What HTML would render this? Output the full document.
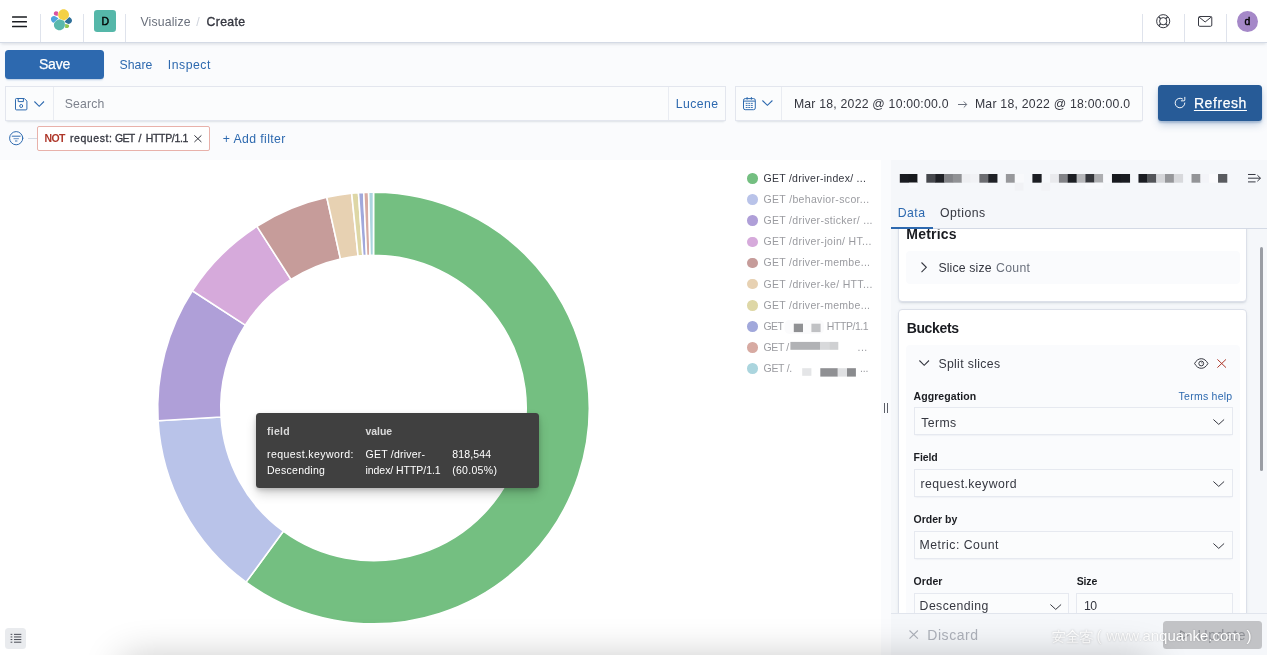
<!DOCTYPE html>
<html lang="en">
<head>
<meta charset="utf-8">
<title>Visualize - Create</title>
<style>
*{box-sizing:border-box;margin:0;padding:0}
html,body{width:1267px;height:655px;overflow:hidden;background:#fafbfd;font-family:"Liberation Sans",sans-serif;}
body{position:relative;will-change:transform}
.abs{position:absolute}
.t{position:absolute;white-space:pre;line-height:1;font-family:"Liberation Sans",sans-serif;}
svg{display:block;overflow:visible}
.hdr{left:0;top:0;width:1267px;height:43.4px;background:#fff;border-bottom:1px solid #d4dae5;box-shadow:0 2px 3px -1px rgba(152,162,179,.35)}
.vdiv{width:1px;top:14px;height:28px;background:#dfe3ec}
.ctl{background:#fbfcfd;box-shadow:0 1px 1px -1px rgba(152,162,179,.25),0 3px 2px -2px rgba(152,162,179,.25),inset 0 0 0 1px #e3e6ee;}
.sel{background:#fbfcfd;box-shadow:0 1px 1px -1px rgba(152,162,179,.18),0 2px 2px -2px rgba(152,162,179,.18),inset 0 0 0 1px #e6e9f0;height:28px}
.panel{background:#fff;border:1px solid #dce0e9;border-radius:4px;box-shadow:0 2px 2px -1px rgba(152,162,179,.3),0 1px 5px -2px rgba(152,162,179,.3)}
</style>
</head>
<body>

<!-- ===== visualization canvas ===== -->
<div class="abs" style="left:0;top:160.3px;width:880.5px;height:495px;background:#fff"></div>
<svg class="abs" style="left:0;top:0" width="880" height="655" viewBox="0 0 880 655"><g stroke="#fff" stroke-width="1.6" stroke-linejoin="round"><path d="M373.50 192.20A215.8 215.8 0 1 1 246.05 582.14L283.31 531.22A152.7 152.7 0 1 0 373.50 255.30Z" fill="#74bf81"/><path d="M246.05 582.14A215.8 215.8 0 0 1 158.08 420.80L221.07 417.06A152.7 152.7 0 0 0 283.31 531.22Z" fill="#b9c3e9"/><path d="M158.08 420.80A215.8 215.8 0 0 1 192.31 290.78L245.29 325.06A152.7 152.7 0 0 0 221.07 417.06Z" fill="#af9fd8"/><path d="M192.31 290.78A215.8 215.8 0 0 1 256.92 226.40L291.01 279.50A152.7 152.7 0 0 0 245.29 325.06Z" fill="#d6aadb"/><path d="M256.92 226.40A215.8 215.8 0 0 1 326.79 197.32L340.45 258.92A152.7 152.7 0 0 0 291.01 279.50Z" fill="#c69c9a"/><path d="M326.79 197.32A215.8 215.8 0 0 1 351.69 193.30L358.07 256.08A152.7 152.7 0 0 0 340.45 258.92Z" fill="#e7d1b2"/><path d="M351.69 193.30A215.8 215.8 0 0 1 358.45 192.73L362.85 255.67A152.7 152.7 0 0 0 358.07 256.08Z" fill="#ded7a6"/><path d="M358.45 192.73A215.8 215.8 0 0 1 363.71 192.42L366.57 255.46A152.7 152.7 0 0 0 362.85 255.67Z" fill="#a1a8db"/><path d="M363.71 192.42A215.8 215.8 0 0 1 368.60 192.26L370.04 255.34A152.7 152.7 0 0 0 366.57 255.46Z" fill="#d7aaa2"/><path d="M368.60 192.26A215.8 215.8 0 0 1 373.50 192.20L373.50 255.30A152.7 152.7 0 0 0 370.04 255.34Z" fill="#abd5de"/></g></svg>

<!-- bottom soft shadow -->


<!-- legend -->
<div class="abs" style="left:747.3px;top:173.10px;width:10.6px;height:10.6px;border-radius:50%;background:#74bf81"></div><div class="abs" style="left:747.3px;top:194.25px;width:10.6px;height:10.6px;border-radius:50%;background:#b9c3e9"></div><div class="abs" style="left:747.3px;top:215.40px;width:10.6px;height:10.6px;border-radius:50%;background:#af9fd8"></div><div class="abs" style="left:747.3px;top:236.55px;width:10.6px;height:10.6px;border-radius:50%;background:#d6aadb"></div><div class="abs" style="left:747.3px;top:257.70px;width:10.6px;height:10.6px;border-radius:50%;background:#c69c9a"></div><div class="abs" style="left:747.3px;top:278.85px;width:10.6px;height:10.6px;border-radius:50%;background:#e7d1b2"></div><div class="abs" style="left:747.3px;top:300.00px;width:10.6px;height:10.6px;border-radius:50%;background:#ded7a6"></div><div class="abs" style="left:747.3px;top:321.15px;width:10.6px;height:10.6px;border-radius:50%;background:#a1a8db"></div><div class="abs" style="left:747.3px;top:342.30px;width:10.6px;height:10.6px;border-radius:50%;background:#d7aaa2"></div><div class="abs" style="left:747.3px;top:363.45px;width:10.6px;height:10.6px;border-radius:50%;background:#abd5de"></div>
<svg class="abs" style="left:0;top:0;filter:blur(0.4px)" width="900" height="400" viewBox="0 0 900 400">
  <rect x="784.5" y="320" width="39.5" height="14" rx="5" fill="#fbfbfc"/>
  <rect x="793.8" y="323.7" width="9.2" height="8.4" fill="#8f9093"/>
  <rect x="811.4" y="323.7" width="9.2" height="8.4" fill="#c0c1c4"/>
  <rect x="790.4" y="341.9" width="29.6" height="7.9" fill="#b1b2b5"/>
  <rect x="820" y="341.9" width="9.2" height="7.9" fill="#d8d9db"/>
  <rect x="829.2" y="341.9" width="9.1" height="7.9" fill="#cfd0d2"/>
  <rect x="802.2" y="368.2" width="9.2" height="7.6" fill="#e4e5e7"/>
  <rect x="820.3" y="368.2" width="17.5" height="8.4" fill="#8f9093"/>
  <rect x="837.8" y="368.2" width="9.2" height="8.4" fill="#e0e1e3"/>
  <rect x="847" y="368.2" width="8.9" height="8.4" fill="#8a8b8e"/>
</svg>

<!-- tooltip -->
<div class="abs" style="left:256.4px;top:413.1px;width:282.2px;height:75.3px;background:#404040;border-radius:3.5px;box-shadow:0 6px 12px -1px rgba(0,0,0,.2),0 2px 4px rgba(0,0,0,.16)"></div>

<!-- legend toggle button (bottom-left) -->
<div class="abs" style="left:5.1px;top:627.5px;width:21.4px;height:21.4px;background:#e9ebee;border-radius:3.5px"></div>
<svg class="abs" style="left:10px;top:633px" width="12" height="10" viewBox="0 0 12 10">
  <g fill="#4a4d56">
    <rect x="0.6" y="0.85" width="1.7" height="1"/><rect x="4" y="0.85" width="7.3" height="1"/>
    <rect x="0.6" y="3.45" width="1.7" height="1"/><rect x="4" y="3.45" width="7.3" height="1"/>
    <rect x="0.6" y="6.05" width="1.7" height="1"/><rect x="4" y="6.05" width="7.3" height="1"/>
    <rect x="0.6" y="8.7" width="1.7" height="1"/><rect x="4" y="8.7" width="7.3" height="1"/>
  </g>
</svg>

<!-- resizer handle -->
<div class="abs" style="left:884px;top:403px;width:1.15px;height:10.4px;background:#5b5e67"></div>
<div class="abs" style="left:887px;top:403px;width:1.15px;height:10.4px;background:#5b5e67"></div>

<!-- ===== sidebar ===== -->
<div class="abs" style="left:891.1px;top:160.3px;width:376px;height:495px;background:#f5f7fa"></div>
<svg class="abs" style="left:0;top:0;filter:blur(0.3px)" width="1267" height="200" viewBox="0 0 1267 200"><rect x="899.80" y="174.0" width="9.24" height="8.7" fill="#1a1c21"/><rect x="908.64" y="174.0" width="9.24" height="8.7" fill="#17191d"/><rect x="917.48" y="174.0" width="9.24" height="8.7" fill="#f7f8fb"/><rect x="926.32" y="174.0" width="9.24" height="8.7" fill="#46484d"/><rect x="935.16" y="174.0" width="9.24" height="8.7" fill="#1f2126"/><rect x="944.00" y="174.0" width="9.24" height="8.7" fill="#828387"/><rect x="952.84" y="174.0" width="9.24" height="8.7" fill="#919295"/><rect x="961.68" y="174.0" width="9.24" height="8.7" fill="#eeeff2"/><rect x="970.52" y="174.0" width="9.24" height="8.7" fill="#f1f2f5"/><rect x="979.36" y="174.0" width="9.24" height="8.7" fill="#6c6d71"/><rect x="988.20" y="174.0" width="9.24" height="8.7" fill="#1f2126"/><rect x="1005.88" y="174.0" width="9.24" height="8.7" fill="#97989b"/><rect x="1014.72" y="174.0" width="9.24" height="8.7" fill="#f8f9fb"/><rect x="1032.40" y="174.0" width="9.24" height="8.7" fill="#1c1e23"/><rect x="1050.08" y="174.0" width="9.24" height="8.7" fill="#e9eaed"/><rect x="1058.92" y="174.0" width="9.24" height="8.7" fill="#828387"/><rect x="1067.76" y="174.0" width="9.24" height="8.7" fill="#1c1e23"/><rect x="1076.60" y="174.0" width="9.24" height="8.7" fill="#b5b6b9"/><rect x="1085.44" y="174.0" width="9.24" height="8.7" fill="#34363b"/><rect x="1094.28" y="174.0" width="9.24" height="8.7" fill="#adaeb1"/><rect x="1103.12" y="174.0" width="9.24" height="8.7" fill="#f8f9fc"/><rect x="1111.96" y="174.0" width="9.24" height="8.7" fill="#181a1f"/><rect x="1120.80" y="174.0" width="9.24" height="8.7" fill="#1a1c21"/><rect x="1138.48" y="174.0" width="9.24" height="8.7" fill="#1a1c21"/><rect x="1147.32" y="174.0" width="9.24" height="8.7" fill="#535559"/><rect x="1156.16" y="174.0" width="9.24" height="8.7" fill="#d5d6d9"/><rect x="1165.00" y="174.0" width="9.24" height="8.7" fill="#96979a"/><rect x="1173.84" y="174.0" width="9.24" height="8.7" fill="#d8d9dc"/><rect x="1191.52" y="174.0" width="9.24" height="8.7" fill="#939497"/><rect x="1200.36" y="174.0" width="9.24" height="8.7" fill="#f3f4f8"/><rect x="1209.20" y="174.0" width="9.24" height="8.7" fill="#fbfbfd"/><rect x="1218.04" y="174.0" width="9.24" height="8.7" fill="#595b5f"/><rect x="908.64" y="182.7" width="8.84" height="5" fill="#f8f9fc"/><rect x="1014.72" y="182.7" width="8.84" height="8" fill="#f1f2f5"/><rect x="1041.24" y="182.7" width="8.84" height="8" fill="#f2f3f6"/><rect x="1085.44" y="182.7" width="17.68" height="6" fill="#f8f9fc"/></svg>
<!-- collapse icon -->
<svg class="abs" style="left:1248.2px;top:174px" width="13.2" height="8.4" viewBox="0 0 13.2 8.4" fill="none" stroke="#353740" stroke-width="1">
  <path d="M0 0.5H7.6M0 4.2H12.4M0 7.9H7.6M9.4 1.2L12.5 4.2L9.4 7.2"/>
</svg>
<!-- tabs -->
<div class="abs" style="left:891.1px;top:228px;width:376px;height:1px;background:#d4dae5"></div>
<div class="abs" style="left:891.1px;top:226.9px;width:41.7px;height:1.8px;background:#2d69af"></div>

<!-- scroll area (clipped) -->
<div class="abs" style="left:891.1px;top:229px;width:376px;height:384px;overflow:hidden">
  <!-- metrics panel -->
  <div class="abs panel" style="left:6.9px;top:-30px;width:349.1px;height:103.4px"></div>
  <div class="t" style="left:15.2px;top:-2px;font-size:14px;font-weight:700;color:#1a1c21;letter-spacing:0.2px">Metrics</div>
  <div class="abs" style="left:15px;top:22px;width:333.7px;height:32.6px;background:#fafbfd;border-radius:4px"></div>
  <!-- buckets panel -->
  <div class="abs panel" style="left:6.9px;top:80.2px;width:349.1px;height:420px"></div>
  <div class="abs" style="left:15px;top:116.2px;width:333.7px;height:400px;background:#fafbfd;border-radius:4px"></div>
  <!-- selects -->
  <div class="abs sel" style="left:22.5px;top:178px;width:319px"></div>
  <div class="abs sel" style="left:22.5px;top:240.2px;width:319px"></div>
  <div class="abs sel" style="left:22.5px;top:302.3px;width:319px"></div>
  <div class="abs sel" style="left:22.5px;top:364.2px;width:155px"></div>
  <div class="abs sel" style="left:185px;top:364.2px;width:156.5px"></div>
</div>
<!-- accordion chevrons -->
<svg class="abs" style="left:920.6px;top:262.2px" width="6" height="10.6" viewBox="0 0 6 10.6" fill="none" stroke="#353740" stroke-width="1.1"><path d="M0.5 0.5L5.3 5.3L0.5 10.1"/></svg>
<svg class="abs" style="left:919px;top:360.3px" width="10.4" height="6" viewBox="0 0 10.4 6" fill="none" stroke="#353740" stroke-width="1.1"><path d="M0.4 0.5L5.2 5.3L10 0.5"/></svg>
<!-- select chevrons -->
<svg class="abs" style="left:1212.7px;top:418.5px" width="11.5" height="6" viewBox="0 0 11.5 6" fill="none" stroke="#353740" stroke-width="1"><path d="M0.4 0.5L5.75 5.4L11.1 0.5"/></svg>
<svg class="abs" style="left:1212.7px;top:480.6px" width="11.5" height="6" viewBox="0 0 11.5 6" fill="none" stroke="#353740" stroke-width="1"><path d="M0.4 0.5L5.75 5.4L11.1 0.5"/></svg>
<svg class="abs" style="left:1212.7px;top:542.6px" width="11.5" height="6" viewBox="0 0 11.5 6" fill="none" stroke="#353740" stroke-width="1"><path d="M0.4 0.5L5.75 5.4L11.1 0.5"/></svg>
<svg class="abs" style="left:1049.6px;top:604.4px" width="11.5" height="6" viewBox="0 0 11.5 6" fill="none" stroke="#353740" stroke-width="1"><path d="M0.4 0.5L5.75 5.4L11.1 0.5"/></svg>
<!-- eye icon -->
<svg class="abs" style="left:1193.7px;top:357.8px" width="14.5" height="11" viewBox="0 0 14.5 11" fill="none" stroke="#353740" stroke-width="1">
  <path d="M0.6 5.5C2.2 2.4 4.6 0.7 7.25 0.7S12.3 2.4 13.9 5.5C12.3 8.6 9.9 10.3 7.25 10.3S2.2 8.6 0.6 5.5Z"/>
  <circle cx="7.25" cy="5.5" r="2.4"/><path d="M7.25 4.6A0.9 0.9 0 0 1 8.15 5.5" stroke-width=".7"/>
</svg>
<!-- red cross -->
<svg class="abs" style="left:1217.4px;top:358.8px" width="9.4" height="9" viewBox="0 0 9.4 9" fill="none" stroke="#ae3629" stroke-width="1"><path d="M0.4 0.4L9 8.6M9 0.4L0.4 8.6"/></svg>
<!-- scrollbar -->
<div class="abs" style="left:1259.7px;top:246.5px;width:3.2px;height:224px;background:#9a9da4;border-radius:2px"></div>

<!-- sidebar bottom bar -->
<div class="abs" style="left:891.1px;top:612.8px;width:376px;height:43px;background:#f5f7fa;border-top:1px solid #e1e5ed"></div>
<svg class="abs" style="left:908.5px;top:630.2px" width="9.4" height="9.2" viewBox="0 0 9.4 9.2" fill="none" stroke="#adb1ba" stroke-width="1.1"><path d="M0.5 0.5L8.9 8.7M8.9 0.5L0.5 8.7"/></svg>
<span class="t" style="left:927.3px;top:628px;font-size:14px;color:#adb1ba;letter-spacing:0.55px">Discard</span>
<div class="abs" style="left:1163px;top:620.9px;width:98.5px;height:27.7px;background:#c2c3c6;border-radius:3.5px"></div>
<svg class="abs" style="left:1180px;top:629.5px" width="9" height="10.5" viewBox="0 0 9 10.5" fill="none" stroke="#909297" stroke-width="1.1" stroke-linejoin="round"><path d="M0.6 0.8L8.2 5.25L0.6 9.7Z"/></svg>
<span class="t" style="left:1197.6px;top:628px;font-size:14px;color:#909297;letter-spacing:0.55px">Update</span>
<!-- watermark -->
<span class="t" style="left:1096.6px;top:628px;font-size:15px;color:#fff;text-shadow:0 0 2px rgba(0,0,0,.22)">(</span>
<span class="t" style="left:1106.6px;top:628px;font-size:15px;color:#fff;letter-spacing:0px;text-shadow:0 0 2px rgba(0,0,0,.22)">www.anquanke.com</span>
<span class="t" style="left:1246.4px;top:628px;font-size:15px;color:#fff;text-shadow:0 0 2px rgba(0,0,0,.22)">)</span>
<svg class="abs" style="left:1051.6px;top:630.2px;filter:drop-shadow(0 0 1px rgba(0,0,0,.2))" width="41" height="13" viewBox="0 0 41 13" fill="none" stroke="#fff" stroke-width="1.05" stroke-linecap="round" stroke-linejoin="round">
  <path d="M6.7 0.2V1.8M1 4.1V2.4H12.4V4.1M0.8 7.3H12.6M5.6 4.4C5 6.4 4.2 7.9 3.2 9.2C6 10 8.6 11.2 10.8 12.5M8.9 4.8C8 8.4 5.6 11 1.4 12.5"/>
  <g transform="translate(13.8 0)"><path d="M6.7 0.3C5.5 2.8 3.2 4.8 0.5 6M6.7 0.3C8 2.8 10.2 4.8 12.9 6M3.3 6.5H10.1M3.8 9.2H9.6M1.2 12.2H12.2M6.7 6.5V12.2"/></g>
  <g transform="translate(27.6 0)"><path d="M6.7 0.1V1.6M1 3.9V2.3H12.4V3.9M5.6 3.6C4.8 5 3.4 6.4 1.6 7.2M5 4.7H9.4C8 7 5 8.6 0.8 9.4M5.4 5.8C7 7.5 9.6 8.6 12.8 9.2M3.4 9.9H10V12.6H3.4Z"/></g>
</svg>

<!-- ===== header ===== -->
<div class="abs hdr"></div>
<div class="abs vdiv" style="left:40px"></div>
<div class="abs vdiv" style="left:83px"></div>
<div class="abs vdiv" style="left:125.2px"></div>
<div class="abs vdiv" style="left:1141.7px"></div>
<div class="abs vdiv" style="left:1184.1px"></div>
<div class="abs vdiv" style="left:1226px"></div>
<!-- hamburger -->
<svg class="abs" style="left:12px;top:15.5px" width="15" height="11.5" viewBox="0 0 15 11.5" fill="#1a1c21"><rect x="0" y="0.2" width="15" height="1.5" rx=".5"/><rect x="0" y="5" width="15" height="1.5" rx=".5"/><rect x="0" y="9.8" width="15" height="1.5" rx=".5"/></svg>
<!-- elastic logo -->
<svg class="abs" style="left:46px;top:5.4px" width="32" height="30" viewBox="0 0 32 30">
  <path d="M17.6 4.3C20.6 4.3 23 6.8 23 9.8C23 11.5 22.3 12.7 21.3 13.5L18.5 15.3C18.2 15.45 17.9 15.45 17.6 15.3L13.9 13.8C12.8 13 12.1 11.5 12.1 9.8C12.1 6.8 14.6 4.3 17.6 4.3Z" fill="#f4d146"/>
  <path d="M13.7 14.3C14.4 14.3 17.5 15.5 18.1 16C18.7 16.6 18.9 18.5 18.9 19.7C18.9 22.8 16.5 25.2 13.5 25.2C10.4 25.2 7.9 22.8 7.9 19.7C7.9 17.8 9 16.3 11 15.2C11.8 14.7 12.9 14.3 13.7 14.3Z" fill="#5ab8ac"/>
  <path d="M8 10.9C9 10.9 11.8 12.5 12.3 13.2C12.45 13.5 12.2 13.9 11.9 14.1L7.9 17.6C7.6 17.85 7.3 17.85 7 17.6C5.8 16.8 4.9 15.5 4.9 14C4.9 12.2 6.3 10.9 8 10.9Z" fill="#4ea3dc"/>
  <path d="M9.9 6.2C10.7 6.2 11.5 6.4 12.1 6.9C11.8 8 11.7 9.5 11.9 10.8C10.8 10.8 9.6 10.6 8.7 10.2C8.1 9.8 7.8 9.2 7.8 8.5C7.8 7.2 8.7 6.2 9.9 6.2Z" fill="#da52a0"/>
  <path d="M23.3 11.9C24.8 12.6 26 14 26 15.6C26 17.5 24.5 18.9 22.8 18.9C21.8 18.9 19.8 17.8 19.2 17.2C18.8 16.8 18.8 16.3 19.1 16C20.5 14.8 22 13.2 23.3 11.9Z" fill="#2f7099"/>
  <path d="M19.1 19.1C20 19.3 21.2 19.3 22 19.5C22.8 19.8 23.2 20.4 23.1 21.2C23 22.3 22 23.1 20.8 23.1C20.2 23.1 19.5 23 19.1 22.8C19.2 21.6 19.2 20.3 19.1 19.1Z" fill="#8fc551"/>
</svg>
<!-- space avatar -->
<div class="abs" style="left:94.2px;top:10.3px;width:22px;height:21.9px;border-radius:3.2px;background:#55b7a9"></div>
<!-- help (lifebuoy) -->
<svg class="abs" style="left:1155.8px;top:13.8px" width="14.4" height="14.4" viewBox="0 0 14.4 14.4" fill="none" stroke="#353740" stroke-width="1">
  <circle cx="7.2" cy="7.2" r="6.55"/><circle cx="7.2" cy="7.2" r="3.65"/>
  <path d="M9.7 4.7L11.7 2.7M4.7 4.7L2.7 2.7M9.7 9.7L11.7 11.7M4.7 9.7L2.7 11.7" stroke-width="1.4" stroke="#3e4049"/>
</svg>
<!-- mail -->
<svg class="abs" style="left:1197.9px;top:16px" width="14.3" height="10.8" viewBox="0 0 14.3 10.8" fill="none" stroke="#353740" stroke-width="1" stroke-linejoin="round">
  <rect x="0.5" y="0.5" width="13.3" height="9.8" rx="1.2"/><path d="M1 1L7.15 6L13.3 1"/>
</svg>
<!-- user avatar -->
<div class="abs" style="left:1237px;top:10.5px;width:21.3px;height:21.3px;border-radius:50%;background:#a588c8"></div>

<!-- ===== top nav ===== -->
<div class="abs" style="left:5.1px;top:50.3px;width:98.9px;height:28.3px;border-radius:3.5px;background:#2d69af;box-shadow:0 2px 2px -1px rgba(45,105,175,.35)"></div>

<!-- ===== query bar ===== -->
<div class="abs ctl" style="left:5.1px;top:86.2px;width:721.2px;height:34.4px"></div>
<div class="abs" style="left:53px;top:87.2px;width:1px;height:32.4px;background:#e9ecf2"></div>
<div class="abs" style="left:668.2px;top:87.2px;width:1px;height:32.4px;background:#e9ecf2"></div>
<!-- save query icon (floppy) -->
<svg class="abs" style="left:15px;top:98px" width="12.4" height="12.4" viewBox="0 0 12.4 12.4" fill="none" stroke="#2d69af" stroke-width="1" stroke-linejoin="round">
  <path d="M1.4 0.5H9.3L11.9 3.1V11A0.9 0.9 0 0 1 11 11.9H1.4A0.9 0.9 0 0 1 0.5 11V1.4A0.9 0.9 0 0 1 1.4 0.5Z"/>
  <path d="M3.2 0.6V3.6H8.4V0.6"/><circle cx="6.2" cy="8" r="1.5"/>
</svg>
<svg class="abs" style="left:33.9px;top:101.3px" width="10.4" height="6" viewBox="0 0 10.4 6" fill="none" stroke="#2d69af" stroke-width="1.1"><path d="M0.4 0.5L5.2 5.3L10 0.5"/></svg>

<!-- date picker -->
<div class="abs ctl" style="left:734.5px;top:86.2px;width:408.3px;height:34.4px"></div>
<div class="abs" style="left:781.2px;top:87.2px;width:1px;height:32.4px;background:#e9ecf2"></div>
<!-- calendar -->
<svg class="abs" style="left:743.3px;top:97.1px" width="12.8" height="13.2" viewBox="0 0 12.8 13.2" fill="none" stroke="#2d69af" stroke-width="1">
  <rect x="0.5" y="1.6" width="11.8" height="11.1" rx="1.7"/><path d="M0.5 4.1H12.3M4.1 0.1V2.7M8.4 0.1V2.7"/>
  <g fill="#2d69af" stroke="none"><rect x="2.7" y="5.9" width="1.9" height=".9"/><rect x="5.3" y="5.9" width="1.9" height=".9"/><rect x="7.9" y="5.9" width="1.9" height=".9"/><rect x="2.7" y="7.95" width="1.9" height=".9"/><rect x="5.3" y="7.95" width="1.9" height=".9"/><rect x="7.9" y="7.95" width="1.9" height=".9"/><rect x="2.7" y="10" width="1.9" height=".9"/><rect x="5.3" y="10" width="1.9" height=".9"/><rect x="7.9" y="10" width="1.9" height=".9"/></g>
</svg>
<svg class="abs" style="left:761.9px;top:100.2px" width="10.8" height="6" viewBox="0 0 10.8 6" fill="none" stroke="#2d69af" stroke-width="1.1"><path d="M0.4 0.5L5.4 5.3L10.4 0.5"/></svg>
<!-- arrow between dates -->
<svg class="abs" style="left:957.9px;top:100.6px" width="9.4" height="7" viewBox="0 0 9.4 7" fill="none" stroke="#6a707c" stroke-width="1"><path d="M0 3.5H8.6M5.8 0.5L8.8 3.5L5.8 6.5"/></svg>

<!-- refresh button -->
<div class="abs" style="left:1157.5px;top:85.4px;width:104.6px;height:35.4px;border-radius:3.5px;background:#275b97;box-shadow:0 4px 8px -1px rgba(36,87,149,.3),0 2px 2px rgba(36,87,149,.25)"></div>
<svg class="abs" style="left:1173.3px;top:96.2px" width="14" height="14" viewBox="0 0 16 16" fill="none" stroke="#fff" stroke-width="1.1" stroke-linecap="round">
  <path d="M10.96 3.36A5.5 5.5 0 1 0 13.5 8"/><path d="M13.5 1.5V4.5A1 1 0 0 1 12.5 5.5H9.5"/>
</svg>

<!-- ===== filter bar ===== -->
<svg class="abs" style="left:8.8px;top:131.4px" width="14.4" height="14.4" viewBox="0 0 14.4 14.4" fill="none" stroke="#2d69af" stroke-width="1" stroke-linecap="round">
  <circle cx="7.2" cy="7.2" r="6.6"/><path d="M3.2 5.2H11.2"/><path d="M4.9 7.7H9.5" stroke-width=".9" opacity=".8"/><path d="M6.4 10H8" stroke-width=".9"/>
</svg>
<div class="abs" style="left:28.3px;top:138px;width:9.2px;height:1px;background:#d4dae5"></div>
<div class="abs" style="left:37.4px;top:126.3px;width:172.4px;height:24.3px;background:#fff;border:1px solid #e8b1aa;border-radius:2px"></div>
<svg class="abs" style="left:193.9px;top:134.9px" width="7.8" height="7.4" viewBox="0 0 7.8 7.4" fill="none" stroke="#353740" stroke-width="1"><path d="M0.4 0.4L7.4 7M7.4 0.4L0.4 7"/></svg>

<span class="t" style="left:140.40px;top:16.00px;font-size:12.25px;font-weight:400;color:#6a707c;letter-spacing:0.176px;">Visualize</span>
<span class="t" style="left:196.20px;top:16.00px;font-size:12.25px;font-weight:400;color:#cfd3dc;letter-spacing:0.000px;">/</span>
<span class="t" style="left:206.60px;top:16.00px;font-size:12.25px;font-weight:400;color:#353740;letter-spacing:0.329px;-webkit-text-stroke:0.35px #353740;">Create</span>
<span class="t" style="left:101.60px;top:16.00px;font-size:10.5px;font-weight:400;color:#000;letter-spacing:0.000px;-webkit-text-stroke:0.4px #000;">D</span>
<span class="t" style="left:1244.50px;top:16.00px;font-size:10.5px;font-weight:400;color:#000;letter-spacing:0.000px;-webkit-text-stroke:0.4px #000;">d</span>
<span class="t" style="left:39.00px;top:57.00px;font-size:14px;font-weight:400;color:#fff;letter-spacing:-0.241px;-webkit-text-stroke:0.25px #fff;">Save</span>
<span class="t" style="left:119.60px;top:59.00px;font-size:12.25px;font-weight:400;color:#2d69af;letter-spacing:0.006px;">Share</span>
<span class="t" style="left:167.70px;top:59.00px;font-size:12.25px;font-weight:400;color:#2d69af;letter-spacing:0.535px;">Inspect</span>
<span class="t" style="left:64.80px;top:98.00px;font-size:12.25px;font-weight:400;color:#7d828d;letter-spacing:0.140px;">Search</span>
<span class="t" style="left:675.70px;top:98.00px;font-size:12.25px;font-weight:400;color:#2d69af;letter-spacing:0.445px;">Lucene</span>
<span class="t" style="left:793.90px;top:98.00px;font-size:12.25px;font-weight:400;color:#353740;letter-spacing:0.220px;">Mar 18, 2022 @ 10:00:00.0</span>
<span class="t" style="left:974.90px;top:98.00px;font-size:12.25px;font-weight:400;color:#353740;letter-spacing:0.245px;">Mar 18, 2022 @ 18:00:00.0</span>
<span class="t" style="left:1193.90px;top:96.00px;font-size:14px;font-weight:400;color:#fff;letter-spacing:0.578px;-webkit-text-stroke:0.25px #fff;text-decoration:underline;text-underline-offset:2px;text-decoration-thickness:1px;">Refresh</span>
<span class="t" style="left:44.50px;top:133.00px;font-size:10.5px;font-weight:700;color:#ae3629;letter-spacing:-0.600px;">NOT</span>
<span class="t" style="left:69.90px;top:133.00px;font-size:10.5px;font-weight:400;color:#353740;letter-spacing:0.597px;-webkit-text-stroke:0.3px #353740;">request:</span>
<span class="t" style="left:114.90px;top:133.00px;font-size:10.5px;font-weight:400;color:#353740;letter-spacing:-0.600px;-webkit-text-stroke:0.3px #353740;">GET</span>
<span class="t" style="left:138.40px;top:133.00px;font-size:10.5px;font-weight:400;color:#353740;letter-spacing:0.000px;-webkit-text-stroke:0.3px #353740;">/</span>
<span class="t" style="left:145.70px;top:133.00px;font-size:10.5px;font-weight:400;color:#353740;letter-spacing:-0.313px;-webkit-text-stroke:0.3px #353740;">HTTP/1.1</span>
<span class="t" style="left:222.70px;top:133.00px;font-size:12.25px;font-weight:400;color:#2d69af;letter-spacing:0.407px;">+ Add filter</span>
<span class="t" style="left:897.70px;top:207.00px;font-size:12.25px;font-weight:400;color:#2d69af;letter-spacing:0.479px;">Data</span>
<span class="t" style="left:940.00px;top:207.00px;font-size:12.25px;font-weight:400;color:#353740;letter-spacing:0.485px;">Options</span>
<span class="t" style="left:938.40px;top:262.00px;font-size:12.25px;font-weight:400;color:#353740;letter-spacing:0.153px;">Slice size</span>
<span class="t" style="left:996.00px;top:262.00px;font-size:12.25px;font-weight:400;color:#6a707c;letter-spacing:0.329px;">Count</span>
<span class="t" style="left:906.70px;top:321.00px;font-size:14px;font-weight:700;color:#1a1c21;letter-spacing:-0.364px;">Buckets</span>
<span class="t" style="left:938.40px;top:358.00px;font-size:12.25px;font-weight:400;color:#353740;letter-spacing:0.342px;">Split slices</span>
<span class="t" style="left:913.60px;top:391.00px;font-size:10.5px;font-weight:700;color:#1a1c21;letter-spacing:0.068px;">Aggregation</span>
<span class="t" style="left:1178.60px;top:391.00px;font-size:10.5px;font-weight:400;color:#2d69af;letter-spacing:0.243px;">Terms help</span>
<span class="t" style="left:921.20px;top:417.00px;font-size:12.25px;font-weight:400;color:#353740;letter-spacing:0.420px;">Terms</span>
<span class="t" style="left:913.60px;top:452.00px;font-size:10.5px;font-weight:700;color:#1a1c21;letter-spacing:-0.122px;">Field</span>
<span class="t" style="left:920.60px;top:478.00px;font-size:12.25px;font-weight:400;color:#353740;letter-spacing:0.431px;">request.keyword</span>
<span class="t" style="left:913.60px;top:514.00px;font-size:10.5px;font-weight:700;color:#1a1c21;letter-spacing:-0.018px;">Order by</span>
<span class="t" style="left:919.60px;top:539.00px;font-size:12.25px;font-weight:400;color:#353740;letter-spacing:0.497px;">Metric: Count</span>
<span class="t" style="left:913.60px;top:576.00px;font-size:10.5px;font-weight:700;color:#1a1c21;letter-spacing:0.048px;">Order</span>
<span class="t" style="left:1076.70px;top:576.00px;font-size:10.5px;font-weight:700;color:#1a1c21;letter-spacing:-0.124px;">Size</span>
<span class="t" style="left:919.60px;top:600.00px;font-size:12.25px;font-weight:400;color:#353740;letter-spacing:0.435px;">Descending</span>
<span class="t" style="left:1084.00px;top:600.00px;font-size:12.25px;font-weight:400;color:#353740;letter-spacing:-0.600px;">10</span>
<span class="t" style="left:267.00px;top:426.00px;font-size:10.5px;font-weight:700;color:#d9d9d9;letter-spacing:0.282px;">field</span>
<span class="t" style="left:365.50px;top:426.00px;font-size:10.5px;font-weight:700;color:#d9d9d9;letter-spacing:-0.053px;">value</span>
<span class="t" style="left:267.00px;top:449.00px;font-size:10.5px;font-weight:400;color:#fff;letter-spacing:0.424px;">request.keyword:</span>
<span class="t" style="left:267.00px;top:465.00px;font-size:10.5px;font-weight:400;color:#fff;letter-spacing:0.276px;">Descending</span>
<span class="t" style="left:365.50px;top:449.00px;font-size:10.5px;font-weight:400;color:#fff;letter-spacing:0.230px;">GET /driver-</span>
<span class="t" style="left:365.50px;top:465.00px;font-size:10.5px;font-weight:400;color:#fff;letter-spacing:-0.052px;">index/ HTTP/1.1</span>
<span class="t" style="left:452.20px;top:449.00px;font-size:10.5px;font-weight:400;color:#fff;letter-spacing:0.164px;">818,544</span>
<span class="t" style="left:452.20px;top:465.00px;font-size:10.5px;font-weight:400;color:#fff;letter-spacing:0.299px;">(60.05%)</span>
<span class="t" style="left:763.50px;top:173.00px;font-size:10.5px;font-weight:400;color:#353740;letter-spacing:0.269px;">GET /driver-index/ ...</span>
<span class="t" style="left:763.50px;top:194.00px;font-size:10.5px;font-weight:400;color:#9a9ba0;letter-spacing:0.336px;">GET /behavior-scor...</span>
<span class="t" style="left:763.50px;top:215.00px;font-size:10.5px;font-weight:400;color:#9a9ba0;letter-spacing:0.310px;">GET /driver-sticker/ ...</span>
<span class="t" style="left:763.50px;top:236.00px;font-size:10.5px;font-weight:400;color:#9a9ba0;letter-spacing:0.326px;">GET /driver-join/ HT...</span>
<span class="t" style="left:763.50px;top:257.00px;font-size:10.5px;font-weight:400;color:#9a9ba0;letter-spacing:0.304px;">GET /driver-membe...</span>
<span class="t" style="left:763.50px;top:279.00px;font-size:10.5px;font-weight:400;color:#9a9ba0;letter-spacing:0.330px;">GET /driver-ke/ HTT...</span>
<span class="t" style="left:763.50px;top:300.00px;font-size:10.5px;font-weight:400;color:#9a9ba0;letter-spacing:0.304px;">GET /driver-membe...</span>
<span class="t" style="left:763.50px;top:321.00px;font-size:10.5px;font-weight:400;color:#9a9ba0;letter-spacing:-0.600px;">GET</span>
<span class="t" style="left:826.80px;top:321.00px;font-size:10.5px;font-weight:400;color:#9a9ba0;letter-spacing:-0.441px;">HTTP/1.1</span>
<span class="t" style="left:763.50px;top:342.00px;font-size:10.5px;font-weight:400;color:#9a9ba0;letter-spacing:-0.375px;">GET /</span>
<span class="t" style="left:857.60px;top:342.00px;font-size:10.5px;font-weight:400;color:#9a9ba0;letter-spacing:0.433px;">...</span>
<span class="t" style="left:763.50px;top:363.00px;font-size:10.5px;font-weight:400;color:#9a9ba0;letter-spacing:-0.284px;">GET /.</span>
<span class="t" style="left:860.00px;top:363.00px;font-size:10.5px;font-weight:400;color:#9a9ba0;letter-spacing:-0.117px;">...</span>
<!-- page-bottom soft shadow -->
<div class="abs" style="left:122px;top:660px;width:1030px;height:30px;border-radius:12px;box-shadow:0 0 38px 2px rgba(0,0,0,.24);pointer-events:none"></div>
</body>
</html>
